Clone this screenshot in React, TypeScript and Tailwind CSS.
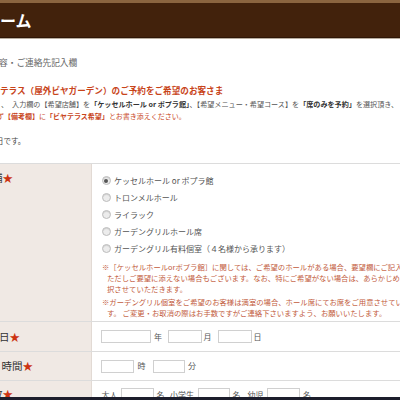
import React from "react";

function Radio({ checked, label }: { checked?: boolean; label: string }) {
  return (
    <div className="flex items-center h-[17px]">
      <span className="ml-[9.5px] w-[9px] h-[9px] shrink-0 rounded-full border border-[#bdbdbd] bg-[#ececec] flex items-center justify-center shadow-[inset_0_1px_1px_rgba(0,0,0,0.12)]">
        {checked && <span className="w-[4px] h-[4px] rounded-full bg-[#555]" />}
      </span>
      <span className="ml-[3.5px] text-[8px] leading-[17px] text-[#555] whitespace-nowrap">{label}</span>
    </div>
  );
}

const Star = () => <span className="text-[#cc3311]">★</span>;

export default function App() {
  return (
    <div className="relative w-[400px] h-[400px] overflow-hidden bg-white font-['Noto_Sans_CJK_JP','Noto_Sans',sans-serif]">
      {/* header */}
      <div className="h-[3px] bg-[#8b6540]" />
      <div className="h-[34px] bg-[#42220c] flex items-center">
        <span className="text-white font-bold text-[16px] leading-[20px] whitespace-nowrap">ーム</span>
      </div>
      <div className="h-[1px] bg-[#2e1607]" />
      <div className="h-[1px] bg-[#b8ad9f]" />

      {/* intro */}
      <div className="mt-[18px] -ml-[1px] text-[8.7px] leading-[12px] text-[#666] whitespace-nowrap">容・ご連絡先記入欄</div>
      <div className="mt-[14px] text-[8.6px] leading-[14px] font-bold text-[#c8441a] whitespace-nowrap">
        テラス（屋外ビヤガーデン）のご予約をご希望のお客さま
      </div>
      <div className="mt-[1px] text-[7.1px] leading-[12px] text-[#555] whitespace-nowrap">
        <span className="ml-[1px]">、</span>
        <span className="ml-[4px]">入力欄の【希望店舗】を</span>
        <span className="font-bold text-[#333]">「ケッセルホール or ポプラ館」</span>
        <span>、【希望メニュー・希望コース】を</span>
        <span className="font-bold text-[#333]">「席のみを予約」</span>
        <span>を選択頂き、</span>
      </div>
      <div className="-ml-[3px] text-[7px] leading-[12px] text-[#c8441a] whitespace-nowrap">
        ず<span className="font-bold">【備考欄】</span>に<span className="font-bold">「ビヤテラス希望」</span>とお書き添えください。
      </div>
      <div className="mt-[13px] -ml-[4px] text-[7.5px] leading-[12px] text-[#444] whitespace-nowrap">日です。</div>

      {/* table */}
      <div className="mt-[16px] border-t border-[#dcdcdc]">
        {/* row 1 */}
        <div className="flex border-b border-[#dcdcdc]">
          <div className="w-[92px] shrink-0 bg-[#f0e9e4] border-r border-[#e2dad4] pt-[7px] overflow-hidden">
            <div className="-ml-[39.5px] text-[10.5px] leading-[14px] text-[#333] whitespace-nowrap">
              希望店舗<Star />
            </div>
          </div>
          <div className="flex-1 min-w-0 overflow-hidden pt-[8px] pb-[3.5px]">
            <Radio checked label="ケッセルホール or ポプラ館" />
            <Radio label="トロンメルホール" />
            <Radio label="ライラック" />
            <Radio label="ガーデングリルホール席" />
            <Radio label="ガーデングリル有料個室（４名様から承ります）" />
            <div className="mt-[3.5px] ml-[10px] pl-[5px] -indent-[5px] text-[7.35px] leading-[11px] text-[#c25b3c] whitespace-nowrap">
              ※［ケッセルホールorポプラ館］に関しては、ご希望のホールがある場合、要望欄にご記入ください。
              <br />
              ただしご要望に添えない場合もございます。なお、特にご希望がない場合は、あらかじめ当店にて選
              <br />
              択させていただきます。
            </div>
            <div className="mt-[2px] ml-[10px] pl-[5px] -indent-[5px] text-[7.35px] leading-[11px] text-[#c25b3c] whitespace-nowrap">
              ※ガーデングリル個室をご希望のお客様は満室の場合、ホール席にてお席をご用意させていただきま
              <br />
              す。 ご変更・お取消の際はお手数ですがご連絡下さいますよう、お願いいたします。
            </div>
          </div>
        </div>

        {/* row 2 */}
        <div className="flex h-[30px] border-b border-[#dcdcdc]">
          <div className="w-[92px] shrink-0 bg-[#f0e9e4] border-r border-[#e2dad4] flex items-center overflow-hidden">
            <div className="-ml-[22px] text-[10.5px] leading-[14px] text-[#333] whitespace-nowrap">
              来店日<Star />
            </div>
          </div>
          <div className="flex-1 min-w-0 flex items-center text-[8px] leading-[12px] text-[#555] whitespace-nowrap">
            <input type="text" className="ml-[9px] w-[50px] h-[13px] border border-[#d0d0d0] bg-white" />
            <span className="ml-[3px]">年</span>
            <input type="text" className="ml-[6px] w-[34px] h-[13px] border border-[#d0d0d0] bg-white" />
            <span className="ml-[1.5px]">月</span>
            <input type="text" className="ml-[6.5px] w-[34px] h-[13px] border border-[#d0d0d0] bg-white" />
            <span className="ml-[1.5px]">日</span>
          </div>
        </div>

        {/* row 3 */}
        <div className="flex h-[29px] border-b border-[#dcdcdc]">
          <div className="w-[92px] shrink-0 bg-[#f0e9e4] border-r border-[#e2dad4] flex items-center overflow-hidden">
            <div className="ml-[1.5px] text-[10.5px] leading-[14px] text-[#333] whitespace-nowrap">
              時間<Star />
            </div>
          </div>
          <div className="flex-1 min-w-0 flex items-center text-[8px] leading-[12px] text-[#555] whitespace-nowrap">
            <input type="text" className="ml-[9px] w-[33px] h-[13px] border border-[#d0d0d0] bg-white" />
            <span className="ml-[3.5px]">時</span>
            <input type="text" className="ml-[7px] w-[32px] h-[13px] border border-[#d0d0d0] bg-white" />
            <span className="ml-[3.5px]">分</span>
          </div>
        </div>

        {/* row 4 */}
        <div className="flex h-[30px]">
          <div className="w-[92px] shrink-0 bg-[#f0e9e4] border-r border-[#e2dad4] pt-[6px] overflow-hidden">
            <div className="-ml-[18.5px] text-[10.5px] leading-[14px] text-[#333] whitespace-nowrap">
              人数<Star />
            </div>
          </div>
          <div className="flex-1 min-w-0 flex items-start pt-[7px] text-[8px] leading-[13px] text-[#555] whitespace-nowrap">
            <span className="ml-[9.5px]">大人</span>
            <input type="text" className="ml-[3px] w-[33px] h-[13px] border border-[#d0d0d0] bg-white" />
            <span className="ml-[3px]">名</span>
            <span className="ml-[5.5px]">小学生</span>
            <input type="text" className="ml-[4px] w-[32px] h-[13px] border border-[#d0d0d0] bg-white" />
            <span className="ml-[2.5px]">名</span>
            <span className="ml-[7px]">幼児</span>
            <input type="text" className="ml-[3.5px] w-[33px] h-[13px] border border-[#d0d0d0] bg-white" />
            <span className="ml-[3px]">名</span>
          </div>
        </div>
      </div>

      {/* taskbar strip */}
      <div className="absolute left-0 bottom-0 w-full h-[3px] bg-[#1d1e2c]" />
    </div>
  );
}
